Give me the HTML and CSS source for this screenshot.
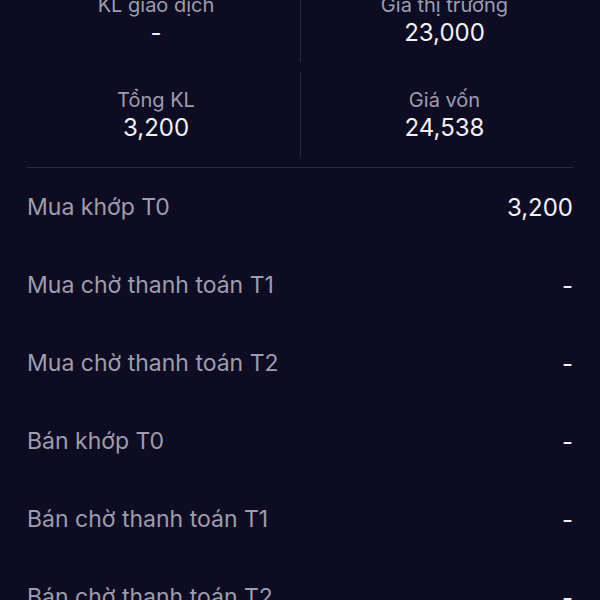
FILE: index.html
```html
<!DOCTYPE html>
<html lang="vi">
<head>
  <meta charset="UTF-8">
  <meta name="viewport" content="width=device-width, initial-scale=1.0">
  <title>Chi tiết mã</title>
  <link rel="stylesheet" href="styles.css">
</head>
<body>
  <div class="main">
    <div class="summary">
      <div class="cell">
        <span class="label">KL giao dịch</span>
        <span class="value">-</span>
      </div>
      <div class="cell">
        <span class="label">Giá thị trường</span>
        <span class="value">23,000</span>
      </div>
      <div class="cell">
        <span class="label">Tổng KL</span>
        <span class="value">3,200</span>
      </div>
      <div class="cell">
        <span class="label">Giá vốn</span>
        <span class="value">24,538</span>
      </div>
    </div>

    <ul class="rows">
      <li><span>Mua khớp T0</span><b>3,200</b></li>
      <li><span>Mua chờ thanh toán T1</span><b>-</b></li>
      <li><span>Mua chờ thanh toán T2</span><b>-</b></li>
      <li><span>Bán khớp T0</span><b>-</b></li>
      <li><span>Bán chờ thanh toán T1</span><b>-</b></li>
      <li><span>Bán chờ thanh toán T2</span><b>-</b></li>
    </ul>
  </div>
</body>
</html>
```

FILE: styles.css
```css
* {
  box-sizing: border-box;
}

body {
  margin: 0;
  background-color: #0e0c22;
  font-family: Inter, "Noto Sans", sans-serif;
  color: #f2f2f7;
  overflow: hidden;
}

.main {
  margin-top: -23px;
}

.summary {
  display: grid;
  grid-template-columns: 1fr 1fr;
  row-gap: 10px;
  padding: 0 12px 10px;
}

.cell {
  height: 85px;
  display: flex;
  flex-direction: column;
  align-items: center;
  justify-content: center;
  gap: 2px;

  &:nth-child(even) {
    border-left: 1px solid #2a293d;
  }
}

.label {
  font-size: 20px;
  line-height: 24px;
  color: #9e9dad;
}

.value {
  font-size: 24px;
  line-height: 28px;
}

.rows {
  list-style: none;
  margin: 0 27px;
  padding: 0;
  border-top: 1px solid #2a293d;

  li {
    height: 78px;
    display: flex;
    align-items: center;
    justify-content: space-between;
    font-size: 23px;
  }

  span {
    color: #9e9dad;
  }

  b {
    font-weight: 400;
    font-size: 24px;
  }
}
```
